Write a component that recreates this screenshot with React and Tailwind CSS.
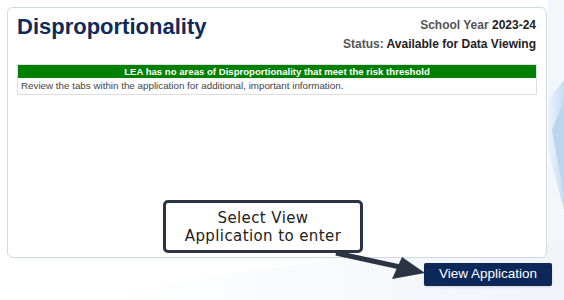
import React from "react";

const Backdrop = () => (
  <svg
    className="absolute inset-0 pointer-events-none"
    width="564"
    height="300"
    viewBox="0 0 564 300"
  >
    <defs>
      <linearGradient id="edge" x1="0" y1="0" x2="1" y2="0">
        <stop offset="0" stopColor="#eef4fb" />
        <stop offset="1" stopColor="#c6dcf1" />
      </linearGradient>
      <linearGradient id="swoosh" x1="0" y1="0" x2="1" y2="0">
        <stop offset="0" stopColor="#ffffff" />
        <stop offset="1" stopColor="#f0f4f9" />
      </linearGradient>
    </defs>
    <rect x="548" y="0" width="16" height="300" fill="#f3f7fc" />
    <path d="M564 80 L548 100 L548 150 L564 210 Z" fill="url(#edge)" />
    <path d="M564 100 L552 130 L564 195 Z" fill="#bcd5ee" />
    <path d="M100 300 C220 270 360 255 564 240 L564 300 Z" fill="url(#swoosh)" />
  </svg>
);

export default function App() {
  return (
    <div
      className="relative w-[564px] h-[300px] bg-white overflow-hidden"
      style={{ fontFamily: "'Liberation Sans', Arial, sans-serif" }}
    >
      <Backdrop />
      <div className="relative ml-[7px] mt-[7px] w-[540px] h-[251px] rounded-[6px] border border-[#cfd7e1] bg-white px-[9px] pt-[3px]">
        <div className="flex justify-between">
          <h1 className="text-[22px] font-bold text-[#0f2a5c] leading-[30px] mt-[1px]">
            Disproportionality
          </h1>
          <div className="flex flex-col items-end text-[12px] font-bold pt-[5px] pr-[1px]">
            <div className="leading-[19px]">
              <span className="text-[#555]">School Year </span>
              <span className="text-[#222]">2023-24</span>
            </div>
            <div className="leading-[19px]">
              <span className="text-[#555]">Status: </span>
              <span className="text-[#222]">Available for Data Viewing</span>
            </div>
          </div>
        </div>
        <div className="mt-[10px] border border-[#dedede]">
          <div className="bg-[#008000] text-white text-[9.6px] font-bold text-center h-[13px] leading-[13px]">
            LEA has no areas of Disproportionality that meet the risk threshold
          </div>
          <div className="text-[9.8px] text-[#444] h-[16px] leading-[16px] px-[3px]">
            Review the tabs within the application for additional, important information.
          </div>
        </div>
      </div>

      <div className="relative flex justify-end pr-[12px] mt-[5px]">
        <button className="w-[128px] h-[23px] bg-[#0b2858] text-white text-[13.5px] font-medium rounded-[2px] shadow-sm">
          View Application
        </button>
      </div>

      <svg
        className="absolute left-0 top-0 pointer-events-none"
        width="564"
        height="300"
        viewBox="0 0 564 300"
      >
        <line x1="336" y1="253" x2="400" y2="267" stroke="#2b3444" strokeWidth="5" />
        <polygon points="402,257 425,273 392,279" fill="#2b3444" />
      </svg>

      <div
        className="absolute left-[163px] top-[200px] w-[200px] h-[53px] rounded-[5px] border-[3px] border-[#2b3444] bg-white flex flex-col items-center justify-center text-[15px] tracking-[0.4px] leading-[18px] text-[#222]"
        style={{ fontFamily: "'DejaVu Sans', Verdana, sans-serif" }}
      >
        <div>Select View</div>
        <div>Application to enter</div>
      </div>
    </div>
  );
}
